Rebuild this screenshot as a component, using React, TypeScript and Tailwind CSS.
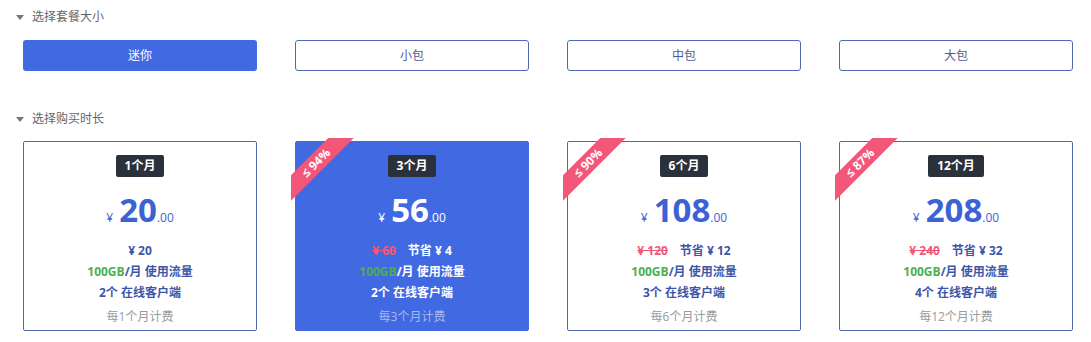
import React from "react";

const FONT = { fontFamily: '"Open Sans","Noto Sans CJK SC",sans-serif' };

type Plan = {
  label: string;
  price: string;
  orig?: string;
  save?: string;
  clients: string;
  footer: string;
  ribbon?: string;
  active?: boolean;
};

const plans: Plan[] = [
  { label: "1个月", price: "20", clients: "2个", footer: "每1个月计费" },
  { label: "3个月", price: "56", orig: "¥ 60", save: "节省 ¥ 4", clients: "2个", footer: "每3个月计费", ribbon: "≤ 94%", active: true },
  { label: "6个月", price: "108", orig: "¥ 120", save: "节省 ¥ 12", clients: "3个", footer: "每6个月计费", ribbon: "≤ 90%" },
  { label: "12个月", price: "208", orig: "¥ 240", save: "节省 ¥ 32", clients: "4个", footer: "每12个月计费", ribbon: "≤ 87%" },
];

function Heading({ text }: { text: string }) {
  return (
    <div className="flex items-center h-[18px] pl-[16px] text-[12px] text-[#666]">
      <span className="w-0 h-0 border-l-[4px] border-r-[4px] border-t-[5px] border-l-transparent border-r-transparent border-t-[#777] mr-[8px]" />
      <span>{text}</span>
    </div>
  );
}

function Card({ p }: { p: Plan }) {
  const a = p.active;
  const main = a ? "text-white" : "text-[#3d62d4]";
  const row = a ? "text-white" : "text-[#3e56a8]";
  return (
    <div
      className={`relative h-[190px] rounded-[2px] border flex flex-col items-center pt-[13px] ${
        a ? "bg-[#4169e1] border-[#4169e1]" : "bg-white border-[#5068b0]"
      }`}
    >
      {p.ribbon && (
        <div className="absolute left-[-5px] top-[-4px] w-[70px] h-[70px] overflow-hidden pointer-events-none">
          <div className="absolute left-[-25px] top-[16px] w-[100px] h-[18px] bg-[#f25779] -rotate-45 flex items-center justify-center text-white text-[12px] font-bold leading-none">
            {p.ribbon}
          </div>
        </div>
      )}
      <div className="h-[22px] px-[9px] rounded-[2px] bg-[#2b313b] text-white text-[12px] font-bold flex items-center">
        {p.label}
      </div>
      <div className={`mt-[16px] h-[33px] flex items-baseline leading-none ${main}`}>
        <span className="text-[12px] mr-[6px]">¥</span>
        <span className="text-[33px] font-bold">{p.price}</span>
        <span className="text-[12px]">.00</span>
      </div>
      <div className="mt-[14px] text-[12px] font-bold leading-[21px] flex flex-col items-center">
        {p.orig ? (
          <div className="flex gap-[12px]">
            <span className="text-[#f25779] line-through">{p.orig}</span>
            <span className={row}>{p.save}</span>
          </div>
        ) : (
          <div className={row}>¥ {p.price}</div>
        )}
        <div>
          <span className="text-[#4caf50]">100GB</span>
          <span className={row}>/月 使用流量</span>
        </div>
        <div className={row}>{p.clients} 在线客户端</div>
      </div>
      <div className={`mt-[3px] text-[12px] leading-[21px] ${a ? "text-[#a9b8ee]" : "text-[#999]"}`}>{p.footer}</div>
    </div>
  );
}

export default function App() {
  const sizes = ["迷你", "小包", "中包", "大包"];
  return (
    <div className="w-[1091px] h-[342px] bg-white pt-[8px]" style={FONT}>
      <Heading text="选择套餐大小" />
      <div className="mt-[14px] ml-[23px] w-[1050px] grid grid-cols-4 gap-x-[38px]">
        {sizes.map((s, i) => (
          <div
            key={s}
            className={`h-[31px] rounded-[3px] flex items-center justify-center text-[12px] ${
              i === 0 ? "bg-[#4169e1] text-white" : "border border-[#5068b0] text-[#4a5a90]"
            }`}
          >
            {s}
          </div>
        ))}
      </div>
      <div className="mt-[39px]">
        <Heading text="选择购买时长" />
      </div>
      <div className="mt-[13px] ml-[23px] w-[1050px] grid grid-cols-4 gap-x-[38px]">
        {plans.map((p) => (
          <Card key={p.label} p={p} />
        ))}
      </div>
    </div>
  );
}
